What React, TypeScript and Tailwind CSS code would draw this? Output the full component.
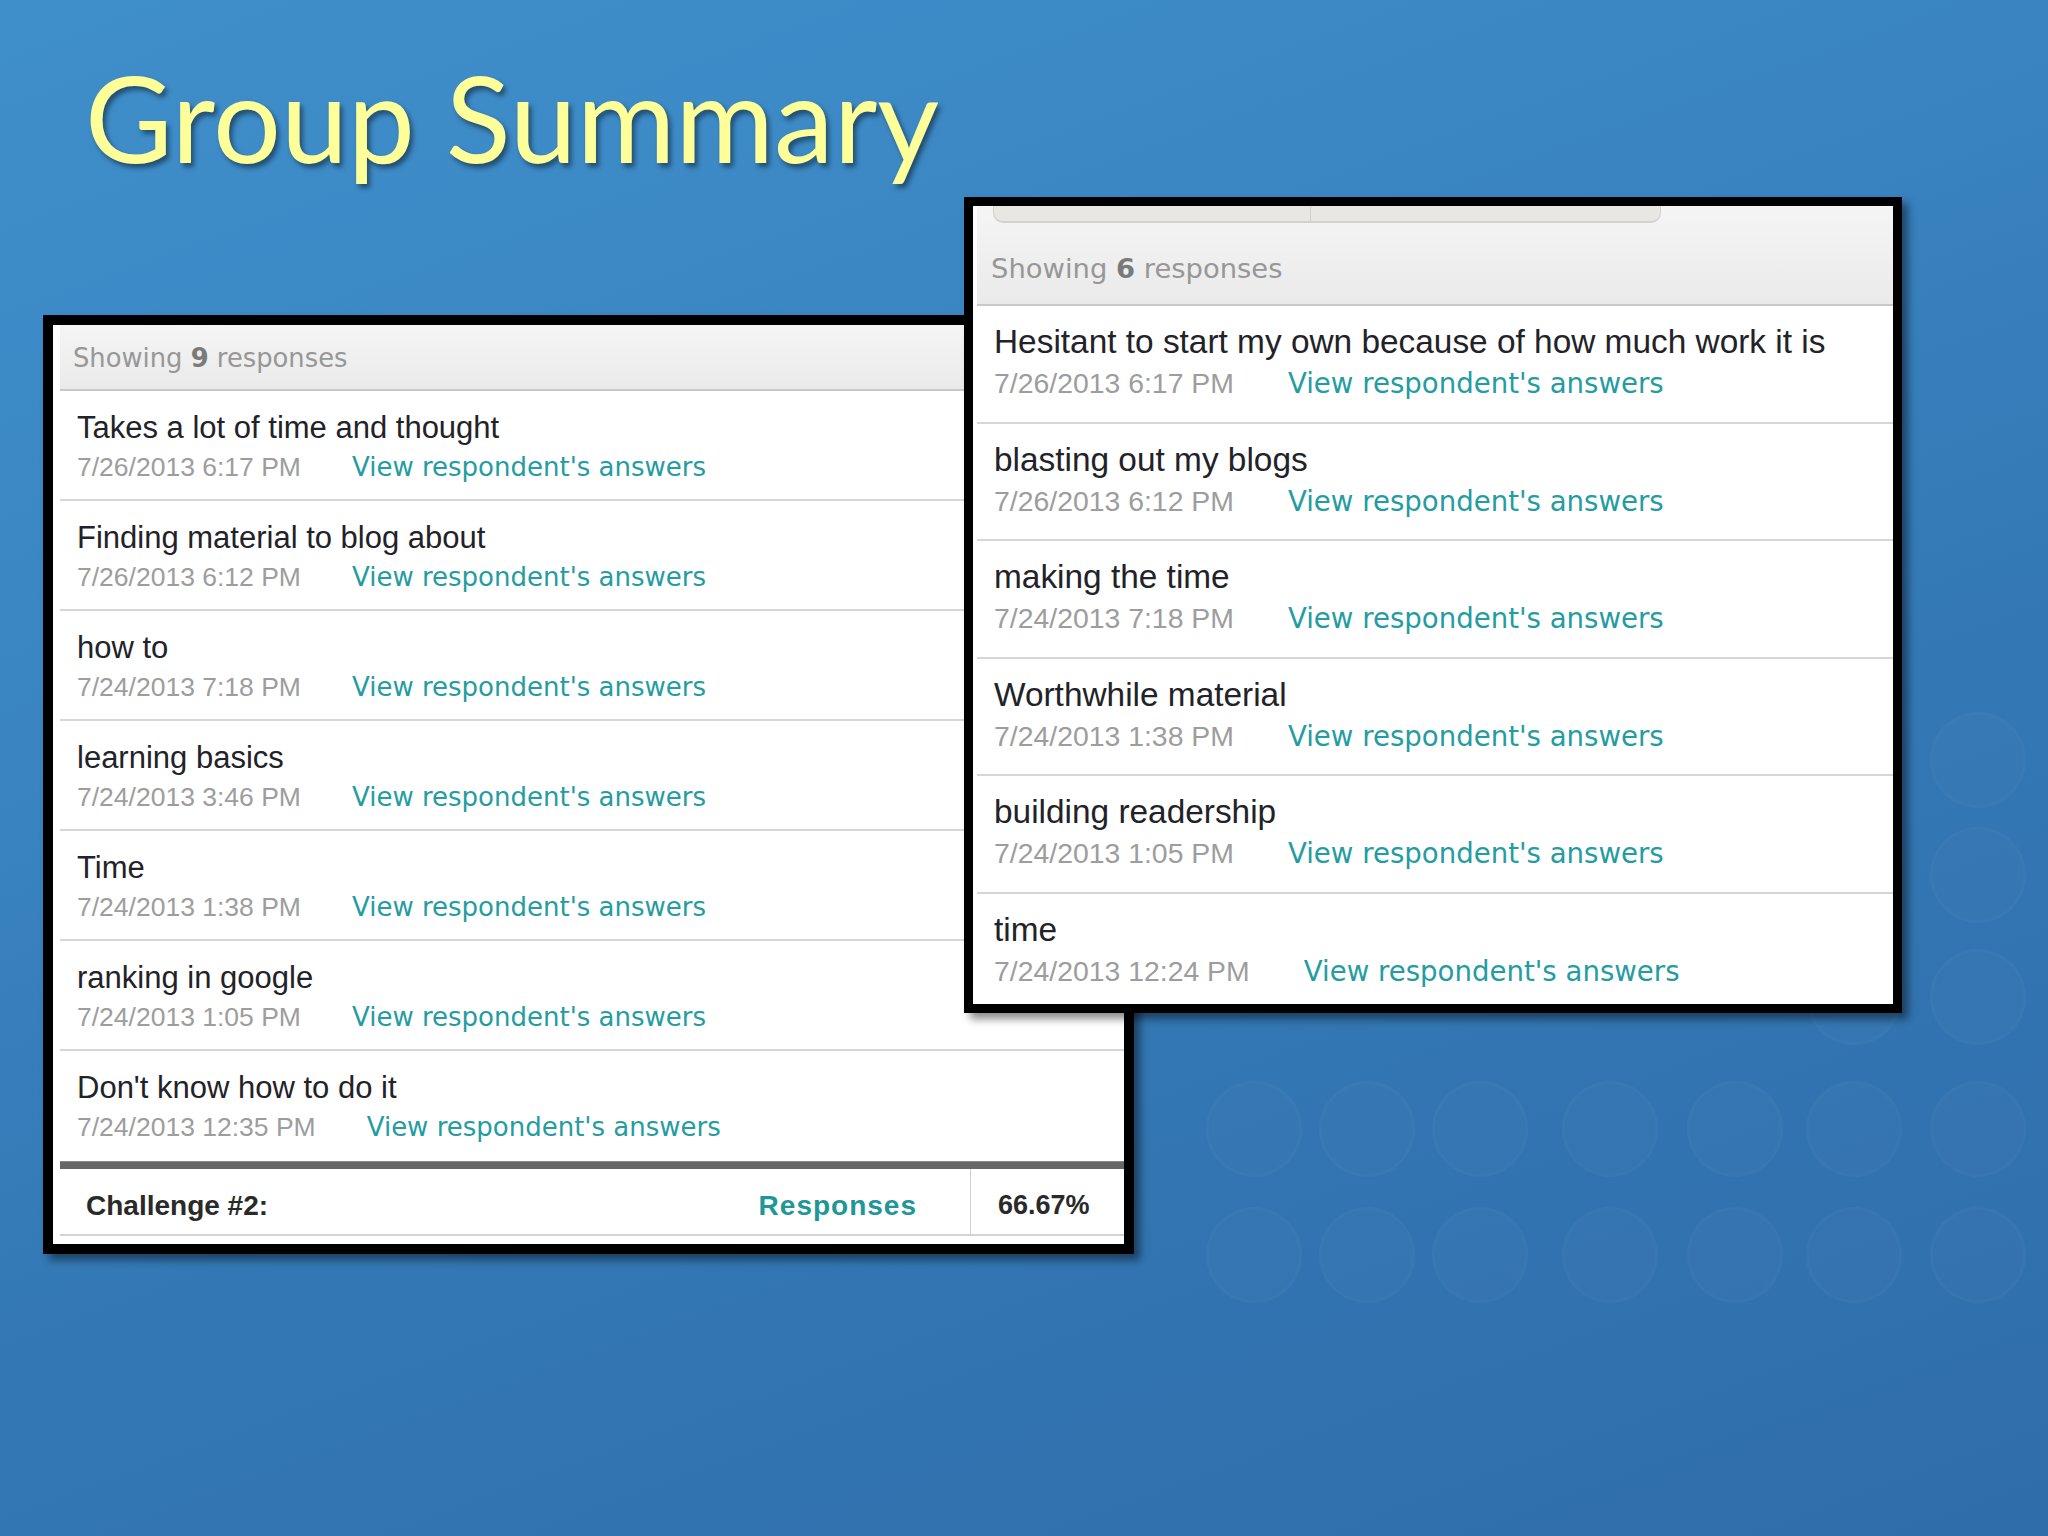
import React from "react";

const leftRows: [string, string][] = [
  ["Takes a lot of time and thought", "7/26/2013 6:17 PM"],
  ["Finding material to blog about", "7/26/2013 6:12 PM"],
  ["how to", "7/24/2013 7:18 PM"],
  ["learning basics", "7/24/2013 3:46 PM"],
  ["Time", "7/24/2013 1:38 PM"],
  ["ranking in google", "7/24/2013 1:05 PM"],
  ["Don't know how to do it", "7/24/2013 12:35 PM"],
];

const rightRows: [string, string][] = [
  ["Hesitant to start my own because of how much work it is", "7/26/2013 6:17 PM"],
  ["blasting out my blogs", "7/26/2013 6:12 PM"],
  ["making the time", "7/24/2013 7:18 PM"],
  ["Worthwhile material", "7/24/2013 1:38 PM"],
  ["building readership", "7/24/2013 1:05 PM"],
  ["time", "7/24/2013 12:24 PM"],
];

const bokeh: [number, number][] = [
  [1254, 1129], [1367, 1129], [1480, 1129], [1610, 1129], [1735, 1129], [1854, 1129], [1978, 1129],
  [1254, 1255], [1367, 1255], [1480, 1255], [1610, 1255], [1735, 1255], [1854, 1255], [1978, 1255],
  [1978, 875], [1978, 997], [1854, 997], [1978, 760],
];

function LeftRow({ title, date, last }: { title: string; date: string; last: boolean }) {
  return (
    <div
      className={
        "h-[110px] pl-[17px] pt-[21px] " + (last ? "" : "border-b-2 border-[#d6d6d6]")
      }
    >
      <div className="text-[31px] leading-[31px] text-[#222228] font-['Liberation_Sans',Arial,sans-serif] whitespace-nowrap">
        {title}
      </div>
      <div className="mt-[11px] flex items-baseline whitespace-nowrap">
        <span className="text-[26.5px] leading-[26px] text-[#9d9d9d] font-['Liberation_Sans',Arial,sans-serif]">
          {date}
        </span>
        <span className="ml-[51px] text-[26px] leading-[26px] text-[#249ca1] font-['DejaVu_Sans',sans-serif]">
          View respondent's answers
        </span>
      </div>
    </div>
  );
}

function RightRow({ title, date, last }: { title: string; date: string; last: boolean }) {
  return (
    <div
      className={
        "pl-[17px] pt-[19px] " +
        (last ? "h-[110.5px]" : "h-[117.5px] border-b-2 border-[#d6d6d6]")
      }
    >
      <div className="text-[33.4px] leading-[33px] text-[#222228] font-['Liberation_Sans',Arial,sans-serif] whitespace-nowrap">
        {title}
      </div>
      <div className="mt-[11px] flex items-baseline whitespace-nowrap">
        <span className="text-[28.4px] leading-[28px] text-[#9d9d9d] font-['Liberation_Sans',Arial,sans-serif]">
          {date}
        </span>
        <span className="ml-[54px] text-[27.6px] leading-[28px] text-[#249ca1] font-['DejaVu_Sans',sans-serif]">
          View respondent's answers
        </span>
      </div>
    </div>
  );
}

export default function App() {
  return (
    <div className="relative w-[2048px] h-[1536px] overflow-hidden bg-[linear-gradient(160deg,#3f8fcb_0%,#3a86c3_30%,#3378b5_60%,#2f6daa_100%)]">
      {bokeh.map(([x, y], i) => (
        <div
          key={i}
          className="absolute w-[96px] h-[96px] rounded-full bg-white/[0.018] border-[3px] border-white/[0.02]"
          style={{ left: x - 48, top: y - 48 }}
        />
      ))}

      <div className="pt-[57px] pl-[85px]">
        <h1 className="text-[120px] leading-[120px] font-['Lato',sans-serif] text-[#ffff99] tracking-[0px] [text-shadow:3px_4px_5px_rgba(0,0,0,0.45)]">
          Group Summary
        </h1>
      </div>

      {/* Left panel */}
      <div className="absolute left-[43px] top-[315px] w-[1091px] h-[939px] border-[10px] border-black bg-white shadow-[6px_6px_8px_rgba(0,0,0,0.45)] flex flex-col">
        <div className="flex flex-col flex-1 pl-[7px]">
          <div className="h-[66px] border-b-2 border-[#c8c8c8] bg-[linear-gradient(180deg,#f5f5f5,#eaeaea)] flex items-center pl-[13px] pt-[2px]">
            <span className="text-[25.8px] text-[#979797] font-['DejaVu_Sans',sans-serif] whitespace-nowrap">
              Showing <span className="font-bold text-[#7a7a7a]">9</span> responses
            </span>
          </div>
          {leftRows.map(([t, d], i) => (
            <LeftRow key={i} title={t} date={d} last={i === leftRows.length - 1} />
          ))}
          <div className="h-[8px] bg-[#676767] border-t border-[#8a8a8a]" />
          <div className="h-[67px] flex border-b-2 border-[#d3d3d3]">
            <div className="w-[910px] flex items-center justify-between pl-[26px] pr-[53px] pt-[8px]">
              <span className="text-[28px] font-bold text-[#2a2a2a] font-['Liberation_Sans',Arial,sans-serif]">
                Challenge #2:
              </span>
              <span className="text-[28px] font-bold tracking-[1px] text-[#1f9697] font-['Liberation_Sans',Arial,sans-serif]">
                Responses
              </span>
            </div>
            <div className="flex-1 border-l border-[#cfcfcf] flex items-center pl-[27px] pt-[8px]">
              <span className="text-[27px] font-bold text-[#2a2a2a] font-['Liberation_Sans',Arial,sans-serif]">
                66.67%
              </span>
            </div>
          </div>
          <div className="flex-1" />
        </div>
      </div>

      {/* Right panel */}
      <div className="absolute left-[964px] top-[197px] w-[938px] h-[816px] border-[9px] border-black bg-white shadow-[6px_6px_8px_rgba(0,0,0,0.45)] flex flex-col">
        <div className="flex flex-col flex-1 pl-[4px] overflow-hidden">
          <div className="h-[100px] border-b-2 border-[#c8c8c8] bg-[linear-gradient(180deg,#f6f5f5,#eaeaea)] flex flex-col">
            <div className="ml-[16px] w-[668px] h-[17px] flex rounded-b-[10px] bg-[#e8e7e3] border-b-2 border-x border-[#d2d2cf]">
              <div className="w-[317px] border-r border-[#cfcfcc]" />
              <div className="flex-1" />
            </div>
            <div className="flex-1 flex items-center pl-[14px] pt-[10px]">
              <span className="text-[27.4px] text-[#979797] font-['DejaVu_Sans',sans-serif] whitespace-nowrap">
                Showing <span className="font-bold text-[#7a7a7a]">6</span> responses
              </span>
            </div>
          </div>
          {rightRows.map(([t, d], i) => (
            <RightRow key={i} title={t} date={d} last={i === rightRows.length - 1} />
          ))}
        </div>
      </div>
    </div>
  );
}
